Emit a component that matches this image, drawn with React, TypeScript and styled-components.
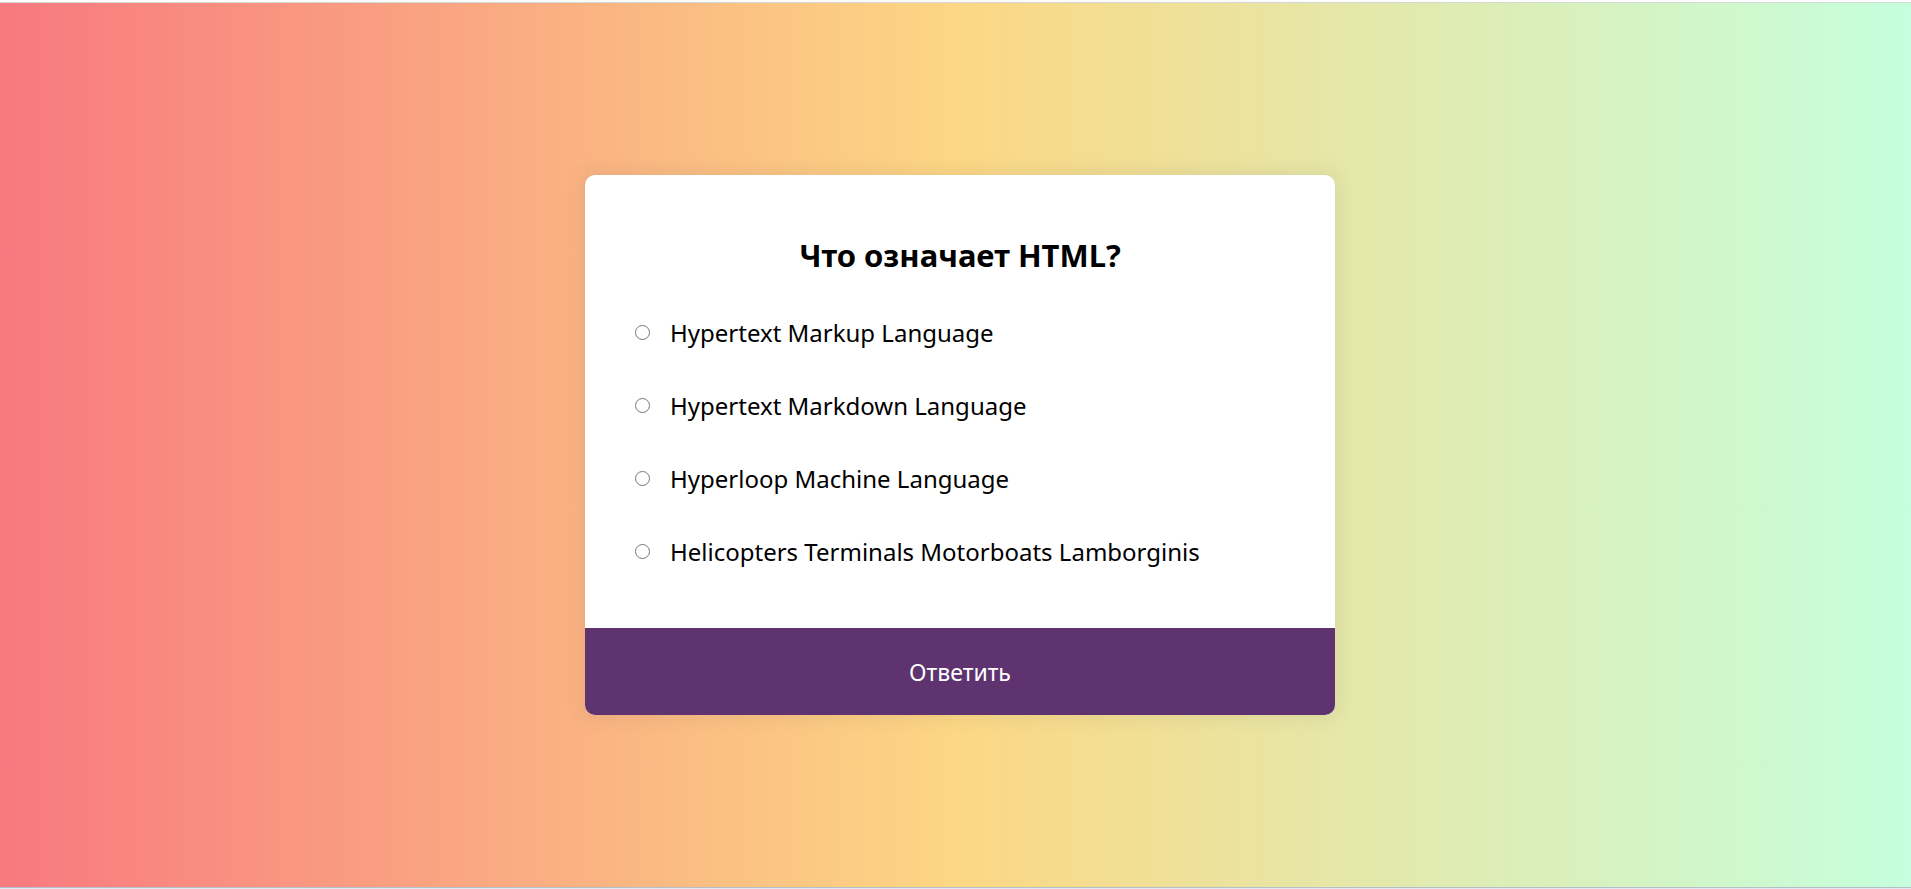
import React, { useState } from "react";
import styled, { createGlobalStyle } from "styled-components";

const GlobalStyle = createGlobalStyle`
  * { box-sizing: border-box; }
  body {
    margin: 0;
    font-family: "Noto Sans", sans-serif;
    color: #000;
  }
`;

const Frame = styled.div`
  display: flex;
  min-height: 100vh;
  border-top: 2px solid #fdfdfd;
  border-bottom: 1px solid #e3e9f2;
`;

const Page = styled.main`
  display: flex;
  flex: 1;
  align-items: center;
  justify-content: center;
  padding-left: 9px;
  border-top: 1px solid #d5d8d9;
  border-bottom: 1px solid #b4bfc6;
  background: linear-gradient(to right, #f8797f, #fcd784 50%, #c5ffdd);
`;

const Card = styled.form`
  width: 750px;
  max-width: 95vw;
  overflow: hidden;
  border-radius: 10px;
  background: #fff;
  box-shadow: 0 0 16px 4px rgba(100, 100, 100, 0.1);
`;

const Question = styled.fieldset`
  margin: 0;
  border: 0;
  padding: 60px 50px;
`;

const Title = styled.legend`
  float: left;
  width: 100%;
  padding: 0 0 40px;
  font-size: 31px;
  line-height: 41px;
  font-weight: 700;
  text-align: center;
`;

const Options = styled.ul`
  clear: both;
  display: grid;
  gap: 40px;
  margin: 0;
  padding: 0;
  list-style: none;
`;

const Option = styled.li`
  display: flex;
  align-items: center;
  gap: 20px;
  font-size: 24px;
  line-height: 33px;
`;

const Radio = styled.input`
  width: 15px;
  height: 15px;
  margin: 0;
`;

const Submit = styled.button`
  display: block;
  width: 100%;
  border: 0;
  padding: 28px 20px 26px;
  background: #5e336f;
  color: #fff;
  font-family: inherit;
  font-size: 23px;
  line-height: 33px;
  cursor: pointer;
`;

const answers = [
  { id: "a", text: "Hypertext Markup Language" },
  { id: "b", text: "Hypertext Markdown Language" },
  { id: "c", text: "Hyperloop Machine Language" },
  { id: "d", text: "Helicopters Terminals Motorboats Lamborginis" },
];

export default function App() {
  const [selected, setSelected] = useState("");
  return (
    <>
      <GlobalStyle />
      <Frame>
        <Page>
          <Card onSubmit={(event) => event.preventDefault()}>
            <Question>
              <Title>Что означает HTML?</Title>
              <Options>
                {answers.map(({ id, text }) => (
                  <Option key={id}>
                    <Radio
                      type="radio"
                      name="answer"
                      id={id}
                      checked={selected === id}
                      onChange={() => setSelected(id)}
                    />
                    <label htmlFor={id}>{text}</label>
                  </Option>
                ))}
              </Options>
            </Question>
            <Submit type="submit">Ответить</Submit>
          </Card>
        </Page>
      </Frame>
    </>
  );
}
